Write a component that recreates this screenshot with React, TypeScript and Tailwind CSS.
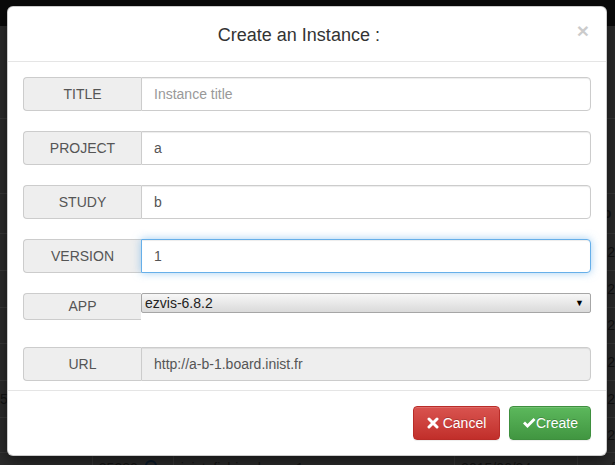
import React from "react";

const rows = [
  { h: "h-[40px]", right: "App", bold: true, left: "" },
  { h: "h-[37px]", right: "ezvis-6.8.2", bold: false, left: "" },
  { h: "h-[37px]", right: "ezvis-6.8.2", bold: false, left: "" },
  { h: "h-[36px]", right: "ezvis-6.8.2", bold: false, left: "" },
  { h: "h-[37px]", right: "ezvis-6.8.2", bold: false, left: "" },
  { h: "h-[37px]", right: "ezvis-6.8.2", bold: false, left: "5" },
  { h: "h-[35px]", right: "ezvis-6.8.2", bold: false, left: "" },
];

function Addon({ label, tall = true }: { label: string; tall?: boolean }) {
  return (
    <div
      className={`w-[118px] shrink-0 flex items-center justify-center bg-[#eeeeee] border border-[#cccccc] border-r-0 rounded-l-[4px] text-[14px] text-[#555555] ${
        tall ? "h-[34px]" : "h-[27px]"
      }`}
    >
      {label}
    </div>
  );
}

function Field({
  label,
  value,
  placeholder,
  focused,
  readOnly,
}: {
  label: string;
  value?: string;
  placeholder?: string;
  focused?: boolean;
  readOnly?: boolean;
}) {
  return (
    <div className="flex h-[34px]">
      <Addon label={label} />
      <div
        className={`flex-1 h-[34px] flex items-center px-[12px] border rounded-r-[4px] text-[14px] ${
          focused
            ? "border-[#66afe9] bg-white shadow-[inset_0_1px_1px_rgba(0,0,0,0.075),0_0_8px_rgba(102,175,233,0.6)]"
            : readOnly
            ? "border-[#cccccc] bg-[#eeeeee] shadow-[inset_0_1px_1px_rgba(0,0,0,0.075)]"
            : "border-[#cccccc] bg-white shadow-[inset_0_1px_1px_rgba(0,0,0,0.075)]"
        } ${value ? "text-[#555555]" : "text-[#999999]"}`}
      >
        {value || placeholder}
      </div>
    </div>
  );
}

export default function App() {
  return (
    <div className="relative w-[615px] h-[465px] overflow-hidden bg-[#2b2b2b] font-['Liberation_Sans',Arial,sans-serif]">
      {/* dimmed page behind */}
      <div className="h-[26px] bg-[#0a0a0a]" />
      <div className="h-[92px]" />
      <div className="h-[75px] border-t border-[#383838]" />
      {rows.map((r, i) => (
        <div key={i} className={`flex ${r.h} border-t border-[#383838] text-[14px] text-[#121212]`}>
          <div className="w-[92px] flex items-center">{r.left}</div>
          <div className="w-[81px] border-l border-[#383838]" />
          <div className="w-[282px] border-l border-[#383838]" />
          <div className="w-[123px] border-l border-[#383838]" />
          <div className={`flex-1 border-l border-[#383838] flex items-center pl-[5px] whitespace-nowrap ${r.bold ? "font-bold" : ""}`}>
            {r.right}
          </div>
        </div>
      ))}
      <div className="flex h-[40px] border-t border-[#383838] text-[14px] text-[#141414]">
        <div className="w-[92px]" />
        <div className="w-[81px] border-l border-[#383838] pl-[6px] pt-[5px] flex items-start gap-[6px] whitespace-nowrap">
          25280
          <svg width="14" height="14" viewBox="0 0 14 14" className="mt-[1px]">
            <circle cx="7" cy="7" r="5" fill="none" stroke="#0b1a2a" strokeWidth="2" />
          </svg>
        </div>
        <div className="w-[282px] border-l border-[#383838] pl-[7px] pt-[5px] whitespace-nowrap">inist_fichiersbugs_1</div>
        <div className="w-[123px] border-l border-[#383838] pl-[6px] pt-[5px] whitespace-nowrap">2015/06/24</div>
        <div className="flex-1 border-l border-[#383838] pl-[6px] pt-[5px] whitespace-nowrap">ezref</div>
      </div>

      {/* modal */}
      <div className="absolute left-[7px] top-[6px] w-[600px] h-[450px] bg-white border border-black/20 rounded-[6px] shadow-[0_5px_15px_rgba(0,0,0,0.5)] flex flex-col">
        <div className="h-[55px] border-b border-[#e5e5e5] flex items-center px-[15px]">
          <div className="flex-1 text-center text-[18px] text-[#333333] leading-[26px] pt-[1px]">Create an Instance :</div>
          <div className="self-start mt-[13px] ml-[2px] mr-[2px] text-[21px] font-bold leading-none text-black opacity-20">×</div>
        </div>
        <div className="pt-[15px] pb-[9px] px-[15px] flex flex-col gap-[20px]">
          <Field label="TITLE" placeholder="Instance title" />
          <Field label="PROJECT" value="a" />
          <Field label="STUDY" value="b" />
          <Field label="VERSION" value="1" focused />
          <div className="flex h-[34px] items-start">
            <Addon label="APP" tall={false} />
            <div className="flex-1 h-[20px] flex items-center justify-between pl-[3px] pr-[6px] border border-[#a6a6a6] rounded-[2px] bg-gradient-to-b from-[#f7f7f7] to-[#dadada] text-[14px] text-[#222222]">
              <span>ezvis-6.8.2</span>
              <span className="text-[9px] leading-none text-black">▼</span>
            </div>
          </div>
          <Field label="URL" value="http://a-b-1.board.inist.fr" readOnly />
        </div>
        <div className="flex-1 border-t border-[#e5e5e5] px-[15px] pt-[15px] flex justify-end items-start gap-[9px]">
          <div className="w-[87px] h-[34px] flex items-center justify-center gap-[4px] rounded-[4px] border border-[#b92c28] bg-gradient-to-b from-[#d9534f] to-[#c12e2a] text-white text-[14px] shadow-[inset_0_1px_0_rgba(255,255,255,0.15),0_1px_1px_rgba(0,0,0,0.075)] [text-shadow:0_-1px_0_rgba(0,0,0,0.2)]">
            <svg width="12" height="12" viewBox="0 0 12 12">
              <path d="M2 2 L10 10 M10 2 L2 10" stroke="white" strokeWidth="3" strokeLinecap="round" />
            </svg>
            <span>Cancel</span>
          </div>
          <div className="w-[82px] h-[34px] flex items-center justify-center rounded-[4px] border border-[#3e8f3e] bg-gradient-to-b from-[#5cb85c] to-[#419641] text-white text-[14px] shadow-[inset_0_1px_0_rgba(255,255,255,0.15),0_1px_1px_rgba(0,0,0,0.075)] [text-shadow:0_-1px_0_rgba(0,0,0,0.2)]">
            <svg width="14" height="12" viewBox="0 0 14 12">
              <path d="M1 6.5 L3 4.5 L5.5 7 L11.5 1 L13.5 3 L5.5 11 Z" fill="white" />
            </svg>
            <span>Create</span>
          </div>
        </div>
      </div>
    </div>
  );
}
